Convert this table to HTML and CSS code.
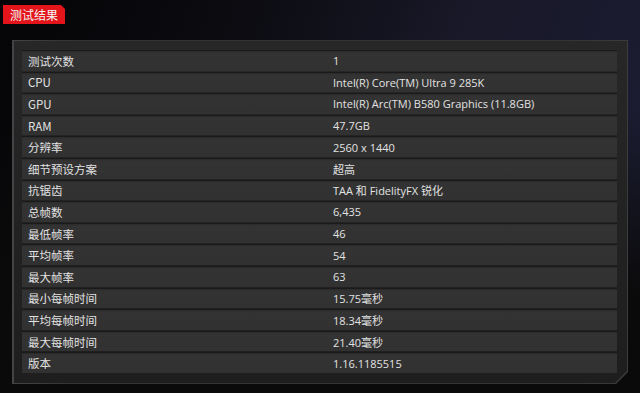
FILE: index.html
```html
<!DOCTYPE html>
<html lang="zh">
<head>
<meta charset="utf-8">
<link rel="stylesheet" href="styles.css">
</head>
<body>
<div class="page">
  <div class="tab">测试结果</div>
  <div class="panel">
    <div class="rows">
      <div class="row"><span class="k">测试次数</span><span class="v">1</span></div>
      <div class="row"><span class="k">CPU</span><span class="v">Intel(R) Core(TM) Ultra 9 285K</span></div>
      <div class="row"><span class="k">GPU</span><span class="v">Intel(R) Arc(TM) B580 Graphics (11.8GB)</span></div>
      <div class="row"><span class="k">RAM</span><span class="v">47.7GB</span></div>
      <div class="row"><span class="k">分辨率</span><span class="v">2560 x 1440</span></div>
      <div class="row"><span class="k">细节预设方案</span><span class="v">超高</span></div>
      <div class="row"><span class="k">抗锯齿</span><span class="v">TAA 和 FidelityFX 锐化</span></div>
      <div class="row"><span class="k">总帧数</span><span class="v">6,435</span></div>
      <div class="row"><span class="k">最低帧率</span><span class="v">46</span></div>
      <div class="row"><span class="k">平均帧率</span><span class="v">54</span></div>
      <div class="row"><span class="k">最大帧率</span><span class="v">63</span></div>
      <div class="row"><span class="k">最小每帧时间</span><span class="v">15.75毫秒</span></div>
      <div class="row"><span class="k">平均每帧时间</span><span class="v">18.34毫秒</span></div>
      <div class="row"><span class="k">最大每帧时间</span><span class="v">21.40毫秒</span></div>
      <div class="row"><span class="k">版本</span><span class="v">1.16.1185515</span></div>
    </div>
  </div>
</div>
</body>
</html>
```
FILE: styles.css
```css
* { box-sizing: border-box; }
html, body { margin: 0; padding: 0; }
body {
  width: 640px;
  height: 393px;
  overflow: hidden;
  font-family: "Open Sans", "Noto Sans CJK SC", sans-serif;
  color: #e2e2e2;
  background:
    linear-gradient(180deg, rgba(0,0,0,0) 0px, rgba(0,0,0,0) 110px, #0a0a0a 300px),
    linear-gradient(110deg, #050507 0%, #0b0b10 30%, #181828 60%, #1d1e35 100%);
}
.page {
  padding: 5px 0 0 3px;
}
.tab {
  width: 62px;
  height: 19px;
  background: #e3141a;
  color: #f4f4f4;
  font-family: "Noto Sans CJK SC", sans-serif;
  font-size: 12px;
  line-height: 19px;
  padding-left: 7px;
  clip-path: polygon(0 0, 58px 0, 62px 4px, 62px 19px, 0 19px);
}
.panel {
  margin: 16px 0 0 9px;
  width: 616px;
  height: 344px;
  background: linear-gradient(90deg, #444444, #333333 10%, #333333 90%, #3c3c3c);
  padding: 1px 1px 1px 2px;
  clip-path: polygon(0 0, 100% 0, 100% calc(100% - 12px), calc(100% - 12px) 100%, 0 100%);
}
.rows {
  height: 100%;
  background: linear-gradient(180deg, #272727, #1e1e1e);
  padding: 9px 10px 10px 8px;
  display: grid;
  grid-template-rows: repeat(15, 1fr);
  row-gap: 1px;
  clip-path: polygon(0 0, 100% 0, 100% calc(100% - 12px), calc(100% - 12px) 100%, 0 100%);
}
.row {
  display: flex;
  align-items: center;
  background: linear-gradient(180deg, #2a2a2a 0px, #333333 2px, #313131 100%);
  border-top: 1px solid #1a1a1a;
  font-size: 11px;
}
.k {
  width: 311px;
  padding-left: 6px;
  font-family: "Noto Sans CJK SC", sans-serif;
  font-size: 11.5px;
}
.v {
  font-family: "Open Sans", "Noto Sans CJK SC", sans-serif;
}
```
